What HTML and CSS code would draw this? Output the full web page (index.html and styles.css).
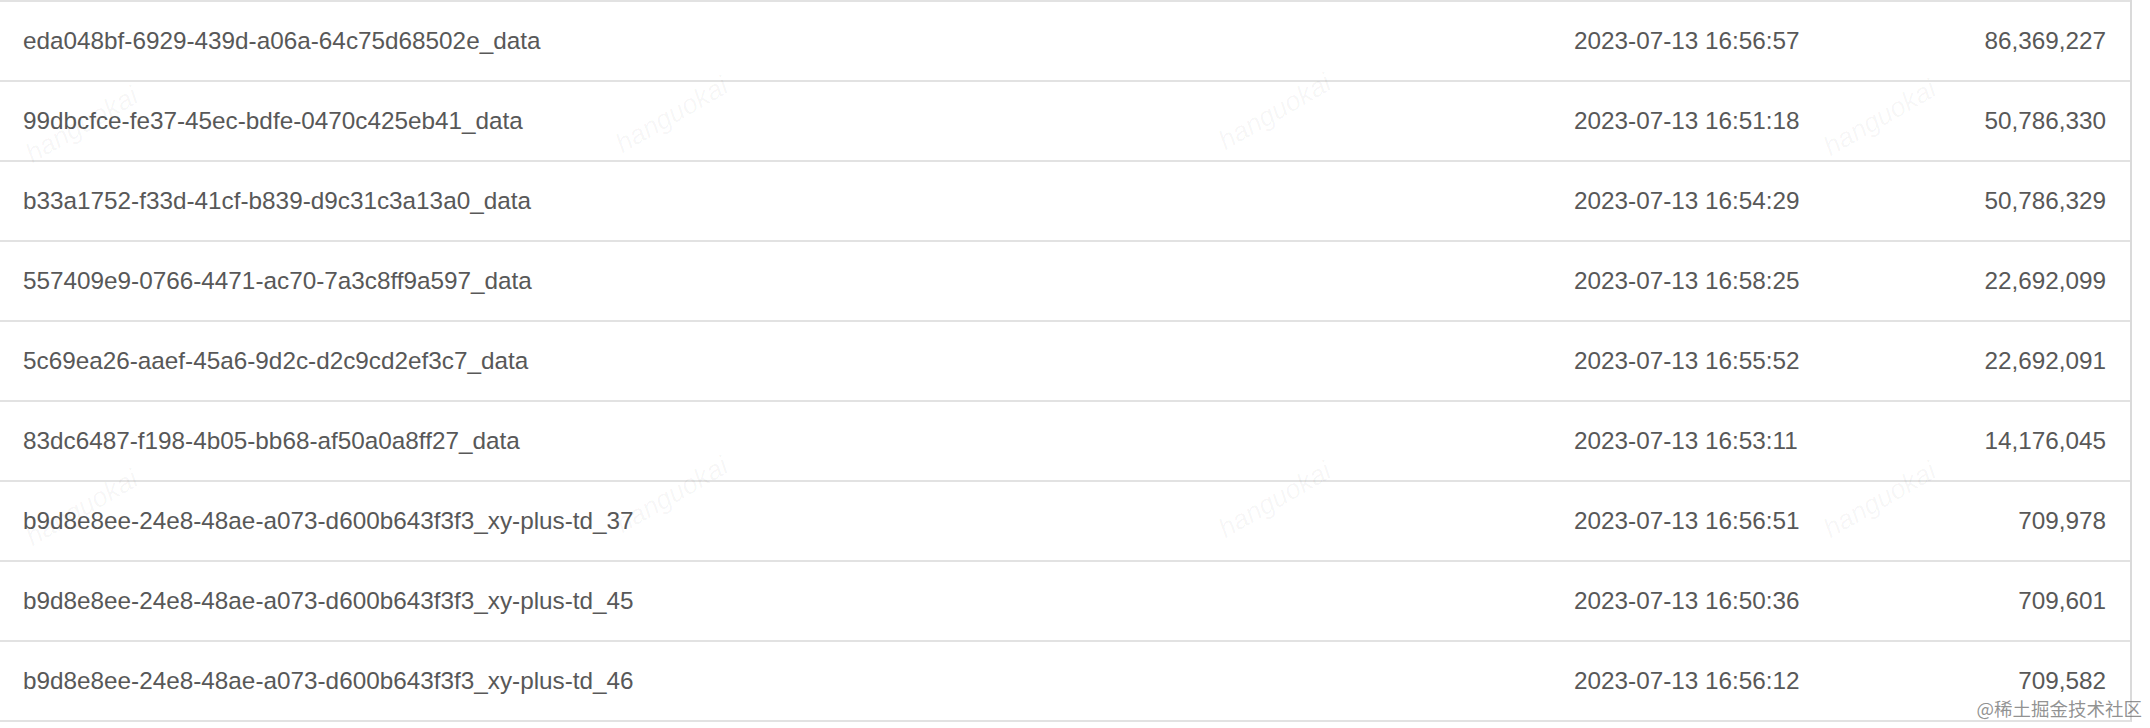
FILE: index.html
```html
<!doctype html>
<html lang="en">
<head>
    <title>Files</title>
    <meta charset="utf-8" />
    <link rel="stylesheet" href="styles.css">
</head>
<body>
    <!-- File list -->
    <div class="file-table">
        <div class="row"><span class="name">eda048bf-6929-439d-a06a-64c75d68502e_data</span><span class="time">2023-07-13 16:56:57</span><span class="size">86,369,227</span></div>
        <div class="row"><span class="name">99dbcfce-fe37-45ec-bdfe-0470c425eb41_data</span><span class="time">2023-07-13 16:51:18</span><span class="size">50,786,330</span></div>
        <div class="row"><span class="name">b33a1752-f33d-41cf-b839-d9c31c3a13a0_data</span><span class="time">2023-07-13 16:54:29</span><span class="size">50,786,329</span></div>
        <div class="row"><span class="name">557409e9-0766-4471-ac70-7a3c8ff9a597_data</span><span class="time">2023-07-13 16:58:25</span><span class="size">22,692,099</span></div>
        <div class="row"><span class="name">5c69ea26-aaef-45a6-9d2c-d2c9cd2ef3c7_data</span><span class="time">2023-07-13 16:55:52</span><span class="size">22,692,091</span></div>
        <div class="row"><span class="name">83dc6487-f198-4b05-bb68-af50a0a8ff27_data</span><span class="time">2023-07-13 16:53:11</span><span class="size">14,176,045</span></div>
        <div class="row"><span class="name">b9d8e8ee-24e8-48ae-a073-d600b643f3f3_xy-plus-td_37</span><span class="time">2023-07-13 16:56:51</span><span class="size">709,978</span></div>
        <div class="row"><span class="name">b9d8e8ee-24e8-48ae-a073-d600b643f3f3_xy-plus-td_45</span><span class="time">2023-07-13 16:50:36</span><span class="size">709,601</span></div>
        <div class="row"><span class="name">b9d8e8ee-24e8-48ae-a073-d600b643f3f3_xy-plus-td_46</span><span class="time">2023-07-13 16:56:12</span><span class="size">709,582</span></div>
    </div>

    <!-- Watermarks over the table -->
    <div class="watermarks">
        <span class="mark m1">hanguokai</span>
        <span class="mark m2">hanguokai</span>
        <span class="mark m3">hanguokai</span>
        <span class="mark m4">hanguokai</span>
        <span class="mark m5">hanguokai</span>
        <span class="mark m6">hanguokai</span>
        <span class="mark m7">hanguokai</span>
        <span class="mark m8">hanguokai</span>
    </div>

    <span class="site-mark">@稀土掘金技术社区</span>
</body>
</html>
```

FILE: styles.css
```css
body {
    margin: 0;
    height: 728px;
    overflow: hidden;
    background-color: #fff;
    font-family: 'Liberation Sans', Arial, sans-serif;
    position: relative;
}

/* Table */
.file-table {
    width: 2130px;
    border-right: 2px solid #dadada;
    border-bottom: 2px solid #e2e2e2;
}

.row {
    display: grid;
    grid-template-columns: 1574px 1fr 300px;
    align-items: center;
    height: 78px;
    border-top: 2px solid #e2e2e2;
    font-size: 24.3px;
    color: #585858;
}

.name {
    padding-left: 23px;
}

.size {
    text-align: right;
    padding-right: 24px;
}

/* Watermarks */
.watermarks {
    position: absolute;
    top: 0;
    left: 0;
    width: 100%;
    height: 100%;
    pointer-events: none;
    overflow: hidden;
}

.mark {
    position: absolute;
    font-size: 27px;
    font-style: italic;
    color: rgba(0, 0, 0, 0.04);
    transform: translate(-50%, -50%) rotate(-30deg);
    white-space: nowrap;
}

.m1 { left: 82px;   top: 125px; }
.m2 { left: 672px;  top: 115px; }
.m3 { left: 1275px; top: 112px; }
.m4 { left: 1880px; top: 118px; }
.m5 { left: 82px;   top: 508px; }
.m6 { left: 672px;  top: 495px; }
.m7 { left: 1275px; top: 500px; }
.m8 { left: 1880px; top: 500px; }

.site-mark {
    position: absolute;
    right: 8px;
    top: 696px;
    font-family: 'Noto Sans CJK SC', sans-serif;
    font-size: 18.5px;
    line-height: 24px;
    color: rgba(110, 110, 110, 0.75);
}
```
